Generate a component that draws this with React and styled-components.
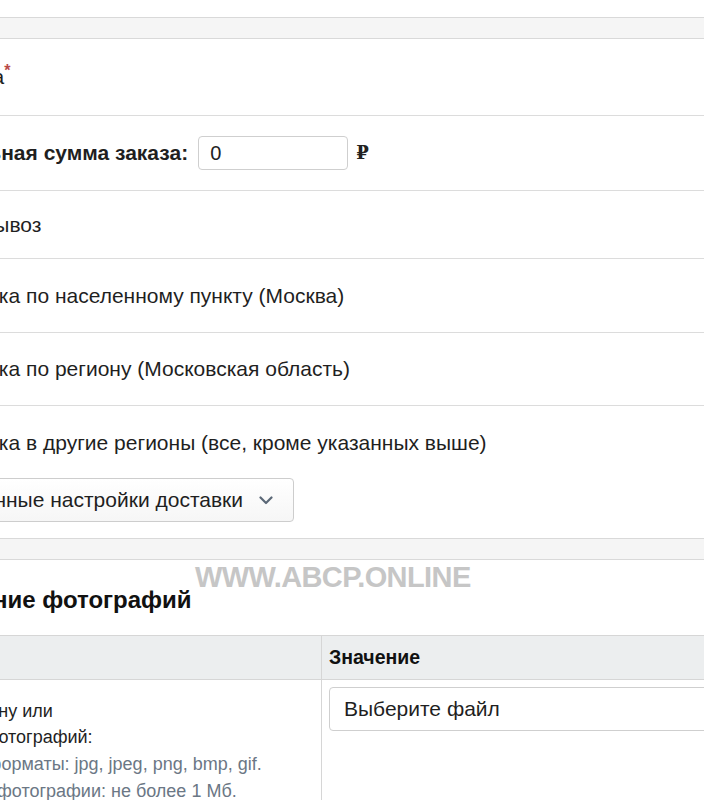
import React from "react";
import styled, { createGlobalStyle } from "styled-components";

const GlobalStyle = createGlobalStyle`
  html, body { margin: 0; padding: 0; background: #fff; overflow: hidden; }
  body {
    font-family: "Liberation Sans", Arial, Helvetica, sans-serif;
    color: #1f1f1f;
    width: 704px;
  }
`;

const Page = styled.div`
  margin-left: -70px;
  width: 900px;
  padding-top: 17px;
`;

const Band = styled.div`
  height: 20px;
  background: #f5f5f5;
  border-top: 1px solid #d9d9d9;
  border-bottom: 1px solid #d9d9d9;
`;

const Row = styled.div`
  border-bottom: ${(p) => (p.$last ? "none" : "1px solid #dcdcdc")};
  padding: ${(p) => p.$pad || "24px 0"};
  font-size: 21px;
  line-height: 26px;
  white-space: nowrap;
`;

const InlineRow = styled(Row)`
  display: flex;
  align-items: center;
  gap: 10px;
`;

const Label = styled.span`
  display: inline-block;
  margin-left: ${(p) => p.$shift || 0}px;
  font-weight: ${(p) => (p.$bold ? 700 : 400)};
`;

const Required = styled.sup`
  color: #b94a48;
  font-size: 16px;
  font-weight: 700;
  vertical-align: 8px;
  line-height: 0;
`;

const NumInput = styled.div`
  box-sizing: border-box;
  width: 150px;
  height: 34px;
  border: 1px solid #cfcfcf;
  border-radius: 4px;
  padding: 0 11px;
  display: flex;
  align-items: center;
  font-size: 20px;
  color: #222;
`;

const Rub = styled.span`
  font-family: "DejaVu Serif", "Liberation Serif", serif;
  font-weight: 700;
  font-size: 18px;
  color: #222;
  margin-left: -2px;
`;

const ToggleButton = styled.div`
  margin-top: 22px;
  margin-left: ${(p) => p.$shift || 0}px;
  box-sizing: border-box;
  height: 44px;
  width: max-content;
  display: flex;
  align-items: center;
  gap: 16px;
  padding: 0 20px 0 16px;
  border: 1px solid #cdcdcd;
  border-radius: 4px;
  background: linear-gradient(#ffffff, #f6f6f6);
  font-size: 21px;
  color: #1f1f1f;
`;

const Section = styled.div`
  position: relative;
  padding-top: 25px;
  margin-left: ${(p) => p.$shift || 0}px;
`;

const Watermark = styled.div`
  position: absolute;
  top: 2px;
  left: 325px;
  font-family: "Liberation Sans", Arial, sans-serif;
  font-weight: 700;
  font-size: 29px;
  letter-spacing: -0.6px;
  color: #c6c6c6;
  line-height: 30px;
  white-space: nowrap;
`;

const Heading = styled.h2`
  margin: 0 0 20px 0;
  font-size: 24px;
  line-height: 30px;
  font-weight: 700;
  color: #111;
  padding-left: ${(p) => p.$indent || 0}px;
  white-space: nowrap;
`;

const Table = styled.div`
  display: grid;
  grid-template-columns: 451px 1fr;
  border-top: 1px solid #d6d6d6;
`;

const HeadCell = styled.div`
  background: #eceeef;
  height: 43px;
  border-bottom: 1px solid #d6d6d6;
  border-left: ${(p) => (p.$divider ? "1px solid #d6d6d6" : "none")};
  display: flex;
  align-items: center;
  padding-left: ${(p) => (p.$divider ? 7 : 8)}px;
  font-weight: 700;
  font-size: 19.5px;
  color: #111;
`;

const Cell = styled.div`
  border-left: ${(p) => (p.$divider ? "1px solid #d6d6d6" : "none")};
  padding: ${(p) => (p.$divider ? "7px 0 0 7px" : "18px 0 0 8px")};
  height: 140px;
  font-size: 18px;
  white-space: nowrap;
`;

const Line = styled.div`
  line-height: ${(p) => (p.$hint ? 27 : 26)}px;
  color: ${(p) => (p.$hint ? "#6b7785" : "#1f1f1f")};
  margin-left: ${(p) => p.$shift || 0}px;
`;

const Hint = styled.div`
  margin-top: 1px;
`;

const FileInput = styled.div`
  box-sizing: border-box;
  height: 44px;
  width: 420px;
  border: 1px solid #cfcfcf;
  border-radius: 4px;
  display: flex;
  align-items: center;
  padding-left: 14px;
  font-size: 21px;
  color: #1f1f1f;
`;

const Chevron = () => (
  <svg width="14" height="9" viewBox="0 0 14 9" fill="none">
    <path d="M1.5 1.5 L7 7 L12.5 1.5" stroke="#5b6877" strokeWidth="2.2" strokeLinecap="round" strokeLinejoin="round" />
  </svg>
);

export default function App() {
  return (
    <>
      <GlobalStyle />
      <Page>
        <Band />
        <Row $pad="25px 0">
          <Label $shift={-16}>
            Доставка<Required>*</Required>
          </Label>
        </Row>
        <InlineRow $pad="20px 0">
          <Label $bold $shift={-38}>Минимальная сумма заказа:</Label>
          <NumInput>0</NumInput>
          <Rub>₽</Rub>
        </InlineRow>
        <Row $pad="20.5px 0">Самовывоз</Row>
        <Row $pad="23.5px 0">Доставка по населенному пункту (Москва)</Row>
        <Row $pad="23px 0">Доставка по региону (Московская область)</Row>
        <Row $pad="24px 0 16px" $last>
          Доставка в другие регионы (все, кроме указанных выше)
          <ToggleButton $shift={-40}>
            Расширенные настройки доставки
            <Chevron />
          </ToggleButton>
        </Row>
        <Band />
        <Section $shift={-60}>
          <Watermark>WWW.ABCP.ONLINE</Watermark>
          <Heading $indent={20}>Добавление фотографий</Heading>
          <Table>
            <HeadCell>Параметр</HeadCell>
            <HeadCell $divider>Значение</HeadCell>
            <Cell>
              <Line $shift={12}>Выберите одну или</Line>
              <Line $shift={16}>несколько фотографий:</Line>
              <Hint>
                <Line $hint>Допустимые форматы: jpg, jpeg, png, bmp, gif.</Line>
                <Line $hint $shift={-3}>Размер одной фотографии: не более 1 Мб.</Line>
              </Hint>
            </Cell>
            <Cell $divider>
              <FileInput>Выберите файл</FileInput>
            </Cell>
          </Table>
        </Section>
      </Page>
    </>
  );
}
